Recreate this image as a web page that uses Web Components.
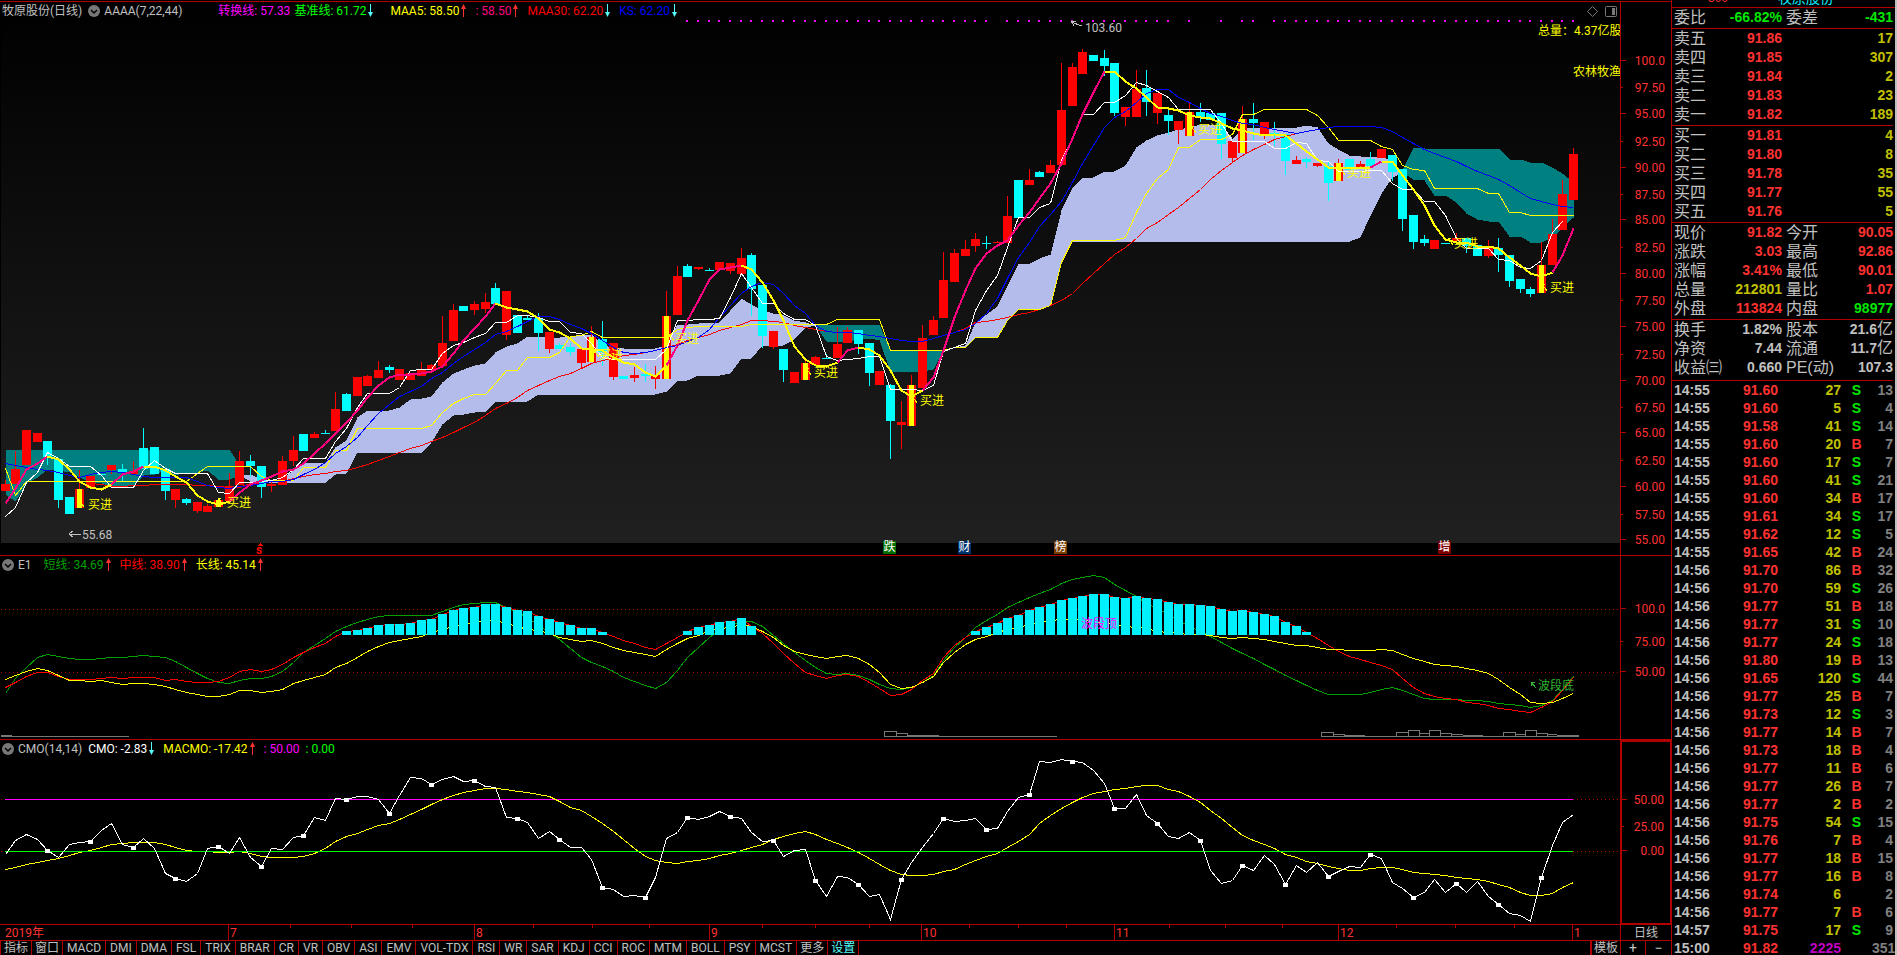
<!DOCTYPE html>
<html lang="zh-CN">
<head>
<meta charset="utf-8">
<title>牧原股份 日线</title>
<style>
  :root { --line: #b00000; --red: #ff3232; --green: #00e600; --gold: #c0c000; --grey: #c0c0c0; --cyan: #54fcfc; }
  html, body { height: 100%; }
  body { margin: 0; background: #000; color: #c0c0c0; font: 12px/12px Roboto, "Noto Sans CJK SC", sans-serif; overflow: hidden; }
</style>
</head>
<body>
<trade-terminal></trade-terminal>

<template id="t-terminal">
  <style>
    :host { display: grid; grid-template-columns: minmax(0, 1fr) 226px; height: 100vh; background: #000; }
    main { display: grid; grid-template-rows: 2px minmax(0, 554fr) minmax(0, 184fr) minmax(0, 185fr) 16px 14px; min-width: 0; }
    .top { border-bottom: 1px solid var(--line); }
  </style>
  <main>
    <div class="top"></div>
    <chart-panel>
      <chart-header slot="head">
        <span>牧原股份(日线)</span><fold-button gap="6"></fold-button><span>AAAA(7,22,44)</span>
        <ind-value gap="36" color="#ff00ff">转换线: 57.33</ind-value>
        <ind-value color="#00ff00" trend="down">基准线: 61.72</ind-value>
        <ind-value gap="16" color="#ffff00" trend="up">MAA5: 58.50</ind-value>
        <ind-value gap="8" color="#ff0080" trend="up">: 58.50</ind-value>
        <ind-value gap="8" color="#ff0000" trend="down">MAA30: 62.20</ind-value>
        <ind-value gap="8" color="#0000ff" trend="down">KS: 62.20</ind-value>
      </chart-header>
      <kline-plot slot="plot"></kline-plot>
      <value-axis slot="axis" top="2" height="553" labels="61:100.0 88:97.50 114:95.00 142:92.50 168:90.00 195:87.50 220:85.00 248:82.50 274:80.00 301:77.50 327:75.00 355:72.50 381:70.00 408:67.50 433:65.00 461:62.50 487:60.00 515:57.50 540:55.00"></value-axis>
    </chart-panel>
    <chart-panel>
      <chart-header slot="head">
        <fold-button></fold-button><span>E1</span>
        <ind-value gap="12" color="#00a000" trend="up">短线: 34.69</ind-value>
        <ind-value gap="8" color="#ff0000" trend="up">中线: 38.90</ind-value>
        <ind-value gap="8" color="#ffff00" trend="up">长线: 45.14</ind-value>
      </chart-header>
      <wave-plot slot="plot"></wave-plot>
      <value-axis slot="axis" top="556" height="183" labels="609:100.0 642:75.00 672:50.00"></value-axis>
    </chart-panel>
    <chart-panel active>
      <chart-header slot="head">
        <fold-button></fold-button><span>CMO(14,14)</span>
        <ind-value gap="6" color="#ffffff" trend="down">CMO: -2.83</ind-value>
        <ind-value gap="8" color="#ffff00" trend="up">MACMO: -17.42</ind-value>
        <ind-value gap="8" color="#ff00ff">: 50.00</ind-value>
        <ind-value gap="6" color="#00ff00">: 0.00</ind-value>
      </chart-header>
      <cmo-plot slot="plot"></cmo-plot>
      <value-axis slot="axis" top="740" height="184" labels="799:50.00 826:25.00 851:0.00"></value-axis>
    </chart-panel>
    <date-scale></date-scale>
    <indicator-bar></indicator-bar>
  </main>
  <quote-board></quote-board>
</template>

<template id="t-panel">
  <style>
    :host { display: grid; grid-template-columns: minmax(0, 1fr) 51px; min-height: 0; border-bottom: 1px solid var(--line); box-sizing: border-box; }
    .canvas { position: relative; min-width: 0; overflow: hidden; }
    .head { position: relative; }
    .plot { position: absolute; inset: 0; }
    .axis { border-left: 1px solid var(--line); min-height: 0; }
    :host([active]) .axis { border: 2px solid var(--line); border-bottom-width: 1px; border-right-width: 1px; }
  </style>
  <div class="canvas"><div class="plot"><slot name="plot"></slot></div><div class="head"><slot name="head"></slot></div></div>
  <div class="axis"><slot name="axis"></slot></div>
</template>

<template id="t-header">
  <style>:host { display: flex; align-items: center; height: 17px; padding-left: 2px; white-space: nowrap; }</style>
  <slot></slot>
</template>

<template id="t-fold">
  <style>
    :host { display: block; margin-right: 4px; }
    button { display: block; padding: 0; border: 0; background: none; width: 12px; height: 12px; }
    svg { display: block; }
  </style>
  <button aria-label="展开"><svg width="12" height="12" viewBox="0 0 12 12"><circle cx="6" cy="6" r="6" fill="#787878"/><path d="M3 5l3 3 3-3" fill="none" stroke="#000" stroke-width="1.5"/></svg></button>
</template>

<template id="t-value">
  <style>:host { display: flex; align-items: center; } svg { margin-left: 1px; }</style>
  <slot></slot>
</template>

<template id="t-date">
  <style>
    :host { display: grid; grid-template-columns: minmax(0, 1fr) 51px; border-bottom: 1px solid var(--line); box-sizing: border-box; color: var(--red); }
    .scale { position: relative; }
    .scale span { position: absolute; top: 2px; padding-left: 2px; }
    svg { position: absolute; inset: 0; width: 100%; height: 100%; }
    .period { border-left: 1px solid var(--line); color: var(--grey); display: grid; place-items: center; }
  </style>
  <div class="scale"></div><div class="period">日线</div>
</template>

<template id="t-bar">
  <style>
    :host { display: flex; min-width: 0; }
    button { font: inherit; color: var(--grey); background: #000; border: 0; border-right: 1px solid var(--line); padding: 1px 4px 0; height: 14px; line-height: 13px; white-space: nowrap; }
    .on { color: var(--cyan); }
    .zh { padding: 1px 3px 0; }
    .first { border-left: 1px solid var(--line); }
    nav { display: flex; flex: 1; min-width: 0; }
    .tpl { border-left: 2px solid var(--line); width: 31px; padding: 1px 2px 0; }
    .pm { width: 25px; font-size: 14px; }
    .last { border-right: 0; }
  </style>
  <nav></nav>
  <button class="tpl">模板</button><button class="pm">+</button><button class="pm last">−</button>
</template>

<template id="t-board">
  <style>
    :host { display: block; box-sizing: border-box; border-left: 1px solid var(--line); border-right: 2px solid #c0c0c0; overflow: hidden; font: bold 14px/18px "Liberation Sans", "Noto Sans CJK SC", sans-serif; }
    .cut { height: 7px; border-bottom: 1px solid var(--line); overflow: hidden; display: flex; align-items: flex-end; line-height: 15px; font-size: 12px; font-weight: 400; }
    .cut span { margin-bottom: 1px; }
    .mkt { color: var(--red); margin-left: 36px; width: 70px; }
    .name { color: #00f0ff; font-size: 14px; }
    table { border-collapse: collapse; table-layout: fixed; width: 221px; }
    td, th { padding: 0; text-align: right; white-space: nowrap; height: 19px; line-height: 19px; overflow: visible; }
    th { text-align: left; font-weight: 400; font-size: 16px; color: var(--grey); padding-left: 2px; }
    th + td + th { padding-left: 4px; }
    .b { border-bottom: 1px solid var(--line); padding-bottom: 1px; }
    tr:last-child .b { padding-bottom: 3px; }
    .unit { font-weight: 400; font-size: 16px; line-height: 0; }
    .r { color: var(--red); } .g { color: var(--green); } .y { color: var(--gold); } .w { color: var(--grey); } .m { color: #c000c0; } .d { color: #808080; }
    .ticks td { height: 18px; line-height: 18px; }
    .ticks td:first-child { text-align: left; padding-left: 2px; }
    .ticks .c { text-align: center; }
  </style>
  <div class="cut"><span class="mkt">300</span><span class="name">牧原股份</span></div>
</template>

<script>
const tpl = id => document.getElementById(id).content.cloneNode(true);
class Base extends HTMLElement {
  connectedCallback() {
    if (this.shadowRoot) return;
    this.attachShadow({ mode: 'open' });
    this.render(this.shadowRoot);
  }
}
const define = (name, id, after) => customElements.define(name, class extends Base {
  render(root) { root.append(tpl(id)); if (after) after(this, root); }
});

/* "y", "y*n" for n equal bars, "-" for a bar that the line passes without a vertex */
const STEP = 10.67;
const xAt = i => Math.floor(5 + STEP * i);
const series = (text, start = 0) => {
  const pts = [];
  let i = start;
  for (const token of text.trim().split(/\s+/)) {
    if (token === '-') { i++; continue; }
    const [y, n] = token.split('*').map(Number);
    for (let k = 0; k < (n || 1); k++) pts.push([i++, y]);
  }
  return pts;
};
const join = pts => pts.map(([i, y]) => (xAt(i) + .5) + ',' + (y + .5)).join(' ');
const line = (pts, color, w = 1) => `<polyline points="${join(pts)}" fill="none" stroke="${color}" stroke-width="${w}"/>`;
const rect = (x, y, w, h, fill) => `<rect x="${x}" y="${y}" width="${w}" height="${h}" fill="${fill}"/>`;
const dots = (x1, x2, y) => `<line x1="${x1}" x2="${x2}" y1="${y + .5}" y2="${y + .5}" stroke="#b00000" stroke-dasharray="1 3"/>`;

class Plot extends Base {
  render(root) {
    const [top, height] = this.range;
    const place = ([x, y, text, cls = '']) =>
      `<span class="${cls}" style="left:${x / 16.2}%;top:${(y - top) / height * 100}%">${text}</span>`;
    root.innerHTML = `<style>
      :host { display: block; position: absolute; inset: 0; }
      svg { display: block; width: 100%; height: 100%; shape-rendering: crispEdges; }
      span { position: absolute; margin-top: -5px; line-height: 12px; white-space: nowrap; color: #ffff00; }
      .grey { color: #c0c0c0; } .pink { color: #ff00ff; } .green { color: #32b432; }
      .tag { color: #fff; width: 13px; height: 13px; line-height: 13px; text-align: center; }
      .fall { background: #006e00; } .fin { background: #00326e; } .list { background: #783c00; } .inc { background: #7d0000; }
      .buy { color: #ff0000; font-weight: 700; }
    </style>
    <svg viewBox="0 ${top} 1620 ${height}" preserveAspectRatio="none">${this.draw()}</svg>${(this.labels || []).map(place).join('')}`;
  }
}

/* per bar: kind (r rising, c falling, y signal), body top and bottom, wick top and bottom */
const CANDLES = `r484-491,480-491 r469-484,451-484 r430-465 r433-442 c441-457,441-465 c459-500,459-508 c497-514 y489-508,470-508 r476-488 c474-475
r465-470,465-474 c469-472,464-482 r471-474,461-474 c448-469,428-469 c447-474 c469-491,469-500 r489-500,489-508 c499-503,498-505 r502-511,502-513 r506-512,504-512
y500-507 r486-501,473-501 r461-485,451-485 c461-466,455-477 c466-487,466-498 r484-486,480-492 r461-485,456-485 r450-461,436-466 c434-451 r434-438,432-438
c433-434,430-434 r409-431,392-431 c394-411,393-411 r377-396 r376-386,375-386 r370-378,361-378 c367-370,365-373 r369-380 r373-380 r370-376,362-376
r365-370,364-370 r343-366,316-366 r310-341,304-341 c306-311 r304-310,301-315 r302-309,293-313 c288-304,283-304 r291-335,291-340 c315-333 c318-320,316-320
c318-333,313-351 r332-349,332-353 c345-349,343-349 c347-352,343-356 r349-363,349-368 y337-362,326-362 c339-352,321-366 r343-377,343-380 c376-379 r375-378,367-382
c374-376,364-382 r375-379,366-389 y316-379,291-379 r276-315,266-315 c266-277,264-277 r267-269,267-270 c270-271,268-271 r262-270 r263-271,263-274 r258-274,248-274
c255-289,253-316 c285-336,285-348 r331-347,331-349 c349-370,349-382 r372-383 y363-380,361-380 r357-365,356-365 c358-359,354-359 r344-358,327-358 r330-343,327-343
c330-344,330-354 c343-373,343-386 r371-385 c385-421,384-459 r422-425,401-449 y385-426,375-426 r338-388,325-388 r320-335,316-335 r280-318,252-318 r253-282,249-282
r249-256,240-256 r239-246,233-252 c243-244,236-249 r242-243,241-243 r216-243,196-243 c180-218 r180-185,169-185 c172-177,171-177 r165-173,160-173 r110-165,63-165
r67-106,63-106 r52-74,49-74 c55-61 c58-66,50-76 c63-113,63-116 r107-117,107-126 r89-117,70-117 c88-102,70-116 r93-113,93-124 c115-121,108-135
r121-130,121-144 y112-136,103-136 c112-117,103-122 c113-120 c113-144,113-159 r141-158,141-163 y119-153,106-153 c119-123,103-140 r122-134,122-139 c133-134,122-146
c134-161,134-175 r160-164,156-164 c159-162,157-168 r163-166,163-167 c166-183,162-201 y163-181,159-181 c159-170 r164-169,161-169 c159-166,152-166 r149-158
c155-172,155-181 c169-219,169-231 c215-242,215-249 c239-243,235-246 r240-249 c243-244 r238-241,233-241 c238-246,238-253 c245-256 r248-256,240-258
c248-255,238-272 c255-281,255-287 c279-289,279-293 c289-294,287-297 y265-293,242-293 r234-265,219-265 r194-230,180-230 r154-200,148-200`.trim().split(/\s+/);

const CLOUDS = [
  ['#008080', 0, '449*22 465', '494 501 483 477 469 470 472 477 482 483 486 486 485 475 474 470 475 472 472 470 479 479 475'],
  ['#b4bcec', 22, '474 474 479 482 478 470 462*3 447 440 417 410*3 407 399 398 396 382 373 369 365 363 352 346 343 336 336 337 337 336 334 334 345 347 348*4 345 324 324 323 322 322 310 298 304 310 313 315 320 322 325',
    '475 481 482*7 474 473 452*7 442 424 415 414 412 411 401*4 394*12 391 380*2 375*3 373 358*2 345*3 339 327 325'],
  ['#008080', 76, '325 324*6 350*6', '325 341*3 339 338 340 371*4 369 350'],
  ['#b4bcec', 88, '350 347 345 322 314 306 285 263*2 258 254 210 187 177*2 171*2 165 147 140 135 132 129 127 124*2 125 138 128 127*5 125 127 143 149 155 156*3 161 172',
    '350 347 347 337*3 320 309*3 305 262 241*27 237 215 193 177 172'],
  ['#008080', 131, '169 147 148*8 159*2 162*2 167 173 182', '172 179 180 195*2 202 213 219 221*2 236*2 242*2 237 227 217']
];
const MAIN = series(`503 488 469 463 456 459 469 481 487 489 484 474 471 466 466 470 476 482 495 501 504 501 492 484 480 476 471 469 463 453
443 433 422 410 397 385 377 374 374 373 371 366 353 340 328 316 303 307 309 311 318 329 332 338 348 349 350 357 362 364
372 376 365 345 320 300 279 269 267 265 269 282 300 320 346 359 365 366 362 350 347 349 355 370 390 396 390 377 350 317
290 268 253 245 240 225 212 198 183 163 138 114 92 71 71 81 88 97 107 108 110 115 117 118 123 128 130 133 135 134
135 143 151 159 167*5 161 161 175 189 205 225 239 242 242 246 246 248 257 265 273 276 272 255 228`);
const FALLING = [[4, 10], [13, 21], [46, 62], [69, 78], [80, 86], [103, 128], [129, 145]];
const WHITE = series(`516 507 482 472 452 458 466*3 475 487*3 470 460 468 473*4 492 493 482*2 481 480 477 469 458*3 441 428 407 393*3 387
370 369 369 353 345 342 337 333 322 322 315*2 317 321 321 332 333 343 357 359*5 349 320 320 319 319 318 297 273 287 303
303 313 319 319 325 356 360 359 358 356 356 389*3 390 385 351 347 343 310 290 275 247 217*2 207 203 160 138 114*2 102*2 95 82
85 91 97 109*4 123 141*4 148*2 142 143 160 161 171*3 170*2 183 189*2 201*2 215 238 248*3 259 260 267 268 260 232 221`);
const YELLOW = series(`468 495 481*16 473 466*5 476 480*3 467*3 450*2 428*7 425 412 403 398 394*2 383 370*2 357*3
352 336 335 331 337*6 337 329 327 326*5 324*8 319*5 350*6 347*2 337*3 320 309*3 305 262 240*5 237 212 193 178 169 147*2 139*3 134
114*2 109*5 115 127 140*4 146 149 165 169 170 188*5 193*2 212*2 215*5`);
const BLUE = series(`463 465 467 469 470 472 475 477 474 472 471 472 474 476 477*4 481 485 487 488 486 485 483 481 481 479 474 469
462 453 446 437 425 413 404 396 391 386 378 372 363 356 349 342 334 331 326 321 316 316 319 324 328 333 340 347 352 353
352 350 347 345 341 337 329 317 305 293 286 282 284 293 305 313 325 331 332 332 333 335 336 338 340 341 341 338 335 332
329 323 313 298 278 257 242 226 214 201 182 163 145 127 117 111 102 93 89 89 97 102 108 113 116 120 123 124 127 129
131 133 131 129 127 126*4 127 131 137 143 149 153 157 161 166 171 175 179 185 192 198 201 204 206 207`);
const RED = series(`483 484 486*2 485*2 484*3 484 485 485 486 487 487 483 483 481 481 478 476 474 473 471 470 467 464 460 456 452 448 445 441
437 432 427 422 415 408 403 397 390 385 380 376 373 368 363 360 358 355 354 352 350 347 344 340 337 334 330 327 324 320 320
321 322 325 327 329 331 332 332 333 335 336 338 340 341 341 338 335 332 328 322 321 319 317 314 312 309 305 300 293 283
273 263 254 247 238 228 222 214 207 198 189 179 170 162 155 149 144 139 136 133`, 8);
const NO_DOT = new Set([93, 110, 112, 113, 115, 118]);

customElements.define('kline-plot', class extends Plot {
  get range() { return [2, 553]; }
  get labels() {
    return [
      [1085, 27, '103.60', 'grey'], [82, 534, '55.68', 'grey'],
      [1538, 30, '总量：4.37亿股'], [1573, 71, '农林牧渔'],
      ...[[88, 504], [227, 502], [599, 354], [675, 338], [814, 372], [920, 400], [1198, 129], [1347, 172], [1454, 243], [1550, 287]].map(([x, y]) => [x, y, '买进']),
      [256, 549, 's', 'buy'], [883, 546, '跌', 'tag fall'], [958, 546, '财', 'tag fin'], [1054, 546, '榜', 'tag list'], [1438, 546, '增', 'tag inc']
    ];
  }
  draw() {
    let s = `<defs><linearGradient id="sky" x1="0" y1="0" x2="0" y2="1"><stop offset="0" stop-color="#000"/><stop offset="1" stop-color="#202020"/></linearGradient></defs>`;
    s += rect(1, 2, 1619, 541, 'url(#sky)');
    for (const [color, start, top, bottom] of CLOUDS)
      s += `<polygon points="${join(series(top, start))} ${join(series(bottom, start).reverse())}" fill="${color}"/>`;
    CANDLES.forEach((text, i) => {
      const [, kind, t, b, h = t, l = b] = text.match(/^(\w)(\d+)-(\d+)(?:,(\d+)-(\d+))?/);
      const x = xAt(i), color = kind === 'c' ? '#00ffff' : '#ff0000';
      s += rect(x, h, 1, l - h, color) + rect(x - 4, t, 9, b - t, color);
      if (kind === 'y') s += rect(x - 2, t, 5, b - t, '#ffff00');
    });
    s += line(RED, '#ff0000') + line(YELLOW, '#ffff00') + line(BLUE, '#0000ff') + line(WHITE, '#ffffff');
    let at = 0;
    for (const [from, to] of FALLING) {
      s += line(MAIN.slice(at, from + 1), '#ff0080', 2) + line(MAIN.slice(from, to + 1), '#ffff00', 2);
      at = to;
    }
    s += line(MAIN.slice(at), '#ff0080', 2);
    for (let i = 64; i < 148; i++) if (!NO_DOT.has(i)) s += rect(xAt(i) - 1, 20, 2, 2, '#ff00ff');
    for (const [x, y] of [[79, 500], [218, 498], [594, 350], [669, 334], [806, 368], [912, 396], [1191, 126], [1340, 168], [1448, 238], [1542, 284]])
      s += `<path d="M${x} ${y}l5 7M${x} ${y}h3M${x} ${y}v3" stroke="#ffff00" fill="none"/>`;
    s += `<path d="M81 534H69M69 534l4-3M69 534l4 3M1082 26l-11-4M1071 21h5M1071 21l3 5" stroke="#c0c0c0" fill="none"/>`;
    s += `<path d="M257 546l3-3 3 3z" fill="#f00"/>`;
    s += `<g fill="none" stroke="#787878" shape-rendering="auto"><path d="M1592.500 6.500l5 5-5 5-5-5z"/><rect x="1605.500" y="6.500" width="11" height="10" rx="1"/></g>` + rect(1612, 8, 3, 7, '#787878');
    return s;
  }
});

const BARS = [
  [32, '631 630 628 625 624 624 623 620 619 614 610 608 607 604 604 607 610 611 616 619 622 625 628 628 632'],
  [64, '631 627 625 622 621 618 626'],
  [91, '631 627 623 618 615 610 607 604 600 598 596 594 594 597 598 596 598 599 602 604 604 605 606 609 611 610 612 614 616 622 626 632']
];
customElements.define('wave-plot', class extends Plot {
  get range() { return [556, 183]; }
  get labels() { return [[1081, 623, '波段顶', 'pink'], [1538, 685, '波段底', 'green']]; }
  draw() {
    let s = dots(1, 1620, 609) + dots(1, 1620, 672);
    s += line(series(`693 678 667 657 654 656 658 659 659 658 657 657 656 655 656 657 661 667 673 678 682 683 680 678 678 676 671 662 652 645
638 631 626 622 619 616 615*5 611 607 604 603 602 602 607 612 617 625 632 639 648 657 662 666 671 677 681
685 688 682 670 657 647 637 630 625 621 621 626 635 643 652 660 667 673 674 673 675 679 684 688 689 687 682 675 660 647
637 627 620 614 607 602 597 593 589 583 579 577 575 577 584 590 596 603 608 614 620 626 631 636 642 648 653 658 664 669
675 680 685 690 694*4 692 689 687 690 694 698 699 699 699 700 700 701 703 704 705 707 705 700 689 676`), '#00a000');
    s += line(series(`687 682 676 672 672 676 679 679 679 678 677 678 677 677 677 680 679 681 682 682 681 677 671 669 671 669 664 657 652 647
643 636 631 630 628 625 624 624 623 620 619 614 610 608 607 604 604 607 610 611 616 619 622 625 628 628 632 636 640 643
647 649 643 637 631 627 625 622 621 618 626 633 643 653 663 672 675 678 675 674 676 682 688 695 694 689 680 673 657 645
637 631 627 623 618 615 610 607 604 600 598 596 594 594 597 598 596 598 599 602 604 604 605 606 609 611 610 612 614 616
622 626 632 638 645 651 656 659 662 665 669 678 687 693 696 698 699 702 703 705 708 709 711 712 707 701 690 677`), '#ff0000');
    s += line(series(`679 675 671 668 670 675 680 680 681 680 682 684 683 683 684 686 689 692 694 696 696 694 690 690 692 691 689 683 680 677
674 667 663 657 651 646 642 640 638 636 632 629 626 624 622 620 620 623 626 629 630 633 637 639 641 640 643 647 650 652
654 656 649 643 638 635 630 628 627 624 626 631 637 645 651 654 656 658 656 655 658 664 672 684 688 687 682 676 662 652
644 639 636 632 629 627 624 622 620 619 619 620 621 623 624 626 627 628 631 632 633 634 634 635 637 638 637 638 639 641
643 645 645 647 649 649 650 650 650 649 650 654 658 661 664 665 666 668 670 673 679 687 694 702 703 702 698 693`), '#ffff00');
    for (const [start, tops] of BARS)
      for (const [i, y] of series(tops, start)) s += rect(xAt(i) - 4, y, 9, 635 - y, '#00f0ff');
    s += `<path d="M1 736.5H129M884.500 736.5V731.500H896V736.5M896.500 733.500H907.500V736M884 736.5H1057M1321.500 736V732.500H1333.500V736M1333 734.500H1344V736M1321 736.5H1579M1396.500 736V732.500H1408M1408.500 736V730.500H1419.500V736M1419 733.500H1429M1429.500 736V730.500H1440.500V736M1440 733.500H1451.500V736M1451 734.500H1463M1503.500 736V732.500H1515.500V736M1515 734.500H1525M1525.500 736V730.500H1536.500V736M1536 733.500H1547.500V736M1547 734.500H1557" fill="none" stroke="#787878"/>`;
    s += rect(1, 735, 11, 2, '#787878') + rect(907, 735, 32, 2, '#787878') + rect(1344, 735, 21, 2, '#787878') + rect(1463, 735, 20, 2, '#787878') + rect(1557, 735, 22, 2, '#787878');
    s += `<path d="M1531 682l5 6M1531 682h4M1531 682v4" stroke="#32b432" fill="none"/>`;
    return s;
  }
});

const CMO = series(`854 840 834 839 850 857 844 842 841 830 823 844 847 838 848 873 878 881 873 848 846 853 837 857 866 848 849 837 835 817
820 798 799 796 796 799 813 795 777 778 784 779 776 781 780 786 787 817 818 822 838 831 839 847 847 859 887 889 896 895
897 877 838 832 817 819 816 811 816 818 832 841 840 856 850 849 880 896 876 877 884 896 894 919 879 862 847 833 818 821
820 818 829 828 811 797 794 761 762 759 761 762 770 783 808 808 794 815 823 836 838 832 840 870 883 880 865 870 855 864
884 865 872 862 876 871 866 867 854 858 882 888 897 892 879 892 883 892 881 896 904 913 915 921 877 845 822 814`);
customElements.define('cmo-plot', class extends Plot {
  get range() { return [740, 184]; }
  draw() {
    let s = dots(1, 1620, 799) + dots(1, 1620, 851);
    s += rect(5, 799, 1568, 1, '#ff00ff');
    s += line(series(`869 867 864 862 860 858 855 852 850 847 844 843 842 842 842 844 847 850 851 851 852 852 851 853 856 857 857 857 856 853
848 841 836 833 829 825 823 819 814 809 804 799 795 792 790 788 788 789 791 792 794 796 801 807 810 816 823 831 839 848
856 860 862 863 861 860 858 855 853 850 847 844 839 836 833 831 834 839 843 847 852 858 864 870 874 875 875 874 871 869
864 860 856 853 847 841 834 823 815 808 802 797 793 791 789 788 786 785 785 789 791 796 802 810 818 827 835 840 844 848
854 857 861 863 866 868 870 870 868 867 867 869 872 873 874 875 877 878 879 881 884 887 892 895 895 893 887 882`), '#ffff00');
    s += rect(5, 851, 1568, 1, '#00ff00') + line(CMO, '#ffffff');
    for (const [i, y] of CMO) if (i && i % 4 === 0) s += rect(xAt(i) - 2, y - 1, 5, 4, '#ffffff');
    return s;
  }
});

customElements.define('value-axis', class extends Base {
  render(root) {
    const top = +this.getAttribute('top'), height = +this.getAttribute('height');
    const rows = this.getAttribute('labels').split(' ').map(t => t.split(':'));
    root.innerHTML = `<style>
      :host { display: block; position: relative; height: 100%; color: var(--red); }
      div { position: absolute; left: 0; right: 6px; height: 12px; margin-top: -6px; line-height: 13px; text-align: right; }
      div::before { content: ""; position: absolute; left: 0; top: 5px; width: 5px; height: 1px; background: var(--line); }
      .minor::before { width: 2px; }
    </style>` + rows.map(([y, t]) =>
      `<div class="${/[27]\.50|[27]5\.00/.test(t) && (height < 200 || /\.50/.test(t)) ? 'minor' : ''}" style="top:${(y - top) / height * 100}%">${t}</div>`).join('');
  }
});

define('chart-panel', 't-panel');
define('chart-header', 't-header');
define('fold-button', 't-fold', el => { el.style.marginLeft = (el.getAttribute('gap') || 0) + 'px'; });
define('ind-value', 't-value', (el, root) => {
  el.style.color = el.getAttribute('color');
  el.style.marginLeft = (el.getAttribute('gap') || 4) + 'px';
  const trend = el.getAttribute('trend');
  if (!trend) return;
  const up = trend === 'up';
  root.innerHTML += `<svg width="7" height="13" viewBox="0 0 7 13"><g fill="${up ? '#ff3232' : '#54fcfc'}"${up ? '' : ' transform="rotate(180 3.500 6.500)"'}><rect x="3" y="1" width="1" height="12"/><path d="M1 5l2.500-5 2.500 5z"/></g></svg>`;
});
define('date-scale', 't-date', (el, root) => {
  const months = [[228, '7'], [474, '8'], [709, '9'], [921, '10'], [1114, '11'], [1338, '12'], [1572, '1']];
  const minor = [290, 351, 412, 533, 592, 649, 762, 815, 869, 969, 1018, 1066, 1169, 1225, 1282, 1396, 1455, 1514];
  root.querySelector('.scale').innerHTML = `<svg viewBox="0 0 1620 15" preserveAspectRatio="none" shape-rendering="crispEdges">${months.map(([x]) => rect(x, 0, 1, 15, '#b00000')).join('')}${minor.map(x => rect(x, 0, 1, 3, '#b00000')).join('')}</svg>`
    + [[3, '2019年'], ...months].map(([x, t]) => `<span style="left:${x / 16.2}%">${t}</span>`).join('');
});
define('indicator-bar', 't-bar', (el, root) => {
  root.querySelector('nav').innerHTML = '指标 窗口 MACD DMI DMA FSL TRIX BRAR CR VR OBV ASI EMV VOL-TDX RSI WR SAR KDJ CCI ROC MTM BOLL PSY MCST 更多 设置'
    .split(' ').map((t, i) => `<button class="${i ? '' : 'first '}${t.charCodeAt(0) > 255 ? 'zh ' : ''}${t === '设置' ? 'on' : ''}">${t}</button>`).join('');
});
define('quote-board', 't-board', (el, root) => {
  const groups = [
    ['委比 g-66.82% 委差 g-431'],
    ['卖五 r91.86 _ y17', '卖四 r91.85 _ y307', '卖三 r91.84 _ y2', '卖二 r91.83 _ y23', '卖一 r91.82 _ y189'],
    ['买一 r91.81 _ y4', '买二 r91.80 _ y8', '买三 r91.78 _ y35', '买四 r91.77 _ y55', '买五 r91.76 _ y5'],
    ['现价 r91.82 今开 r90.05', '涨跌 r3.03 最高 r92.86', '涨幅 r3.41% 最低 r90.01', '总量 y212801 量比 r1.07', '外盘 r113824 内盘 g98977'],
    ['换手 w1.82% 股本 w21.6亿', '净资 w7.44 流通 w11.7亿', '收益㈢ w0.660 PE(动) w107.3']
  ];
  const value = t => `${t.slice(1).replace('亿', '<span class="unit">亿</span>')}`;
  const rows = groups.flatMap(g => g.map((t, i) => {
    const [a, b, c, d] = t.split(' '), cls = i === g.length - 1 ? ' b' : '';
    return `<tr><th class="${cls}" scope="row">${a}</th><td class="${b[0]}${cls}">${value(b)}</td><th class="${cls}">${c === '_' ? '' : c}</th><td class="${d[0]}${cls}">${value(d)}</td></tr>`;
  })).join('');
  const ticks = `1455 60 27 S 13|1455 60 5 S 4|1455 58 41 S 14|1455 60 20 B 7|1455 60 17 S 7|1455 60 41 S 21|1455 60 34 B 17|1455 61 34 S 17|1455 62 12 S 5|1455 65 42 B 24|1456 70 86 B 32|1456 70 59 S 26|1456 77 51 B 18|1456 77 31 S 10|1456 77 24 S 18|1456 80 19 B 13|1456 65 120 S 44|1456 77 25 B 7|1456 73 12 S 3|1456 77 14 B 7|1456 73 18 B 4|1456 77 11 B 6|1456 77 26 B 7|1456 77 2 B 2|1456 75 54 S 15|1456 76 7 B 4|1456 77 18 B 15|1456 77 16 B 8|1456 74 6 _ 2|1456 77 7 B 6|1457 75 17 S 9|1500 82 2225 _ 351`
    .split('|').map(t => {
      const [time, price, vol, side, n] = t.split(' ');
      return `<tr><td class="w">${time.slice(0, 2)}:${time.slice(2)}</td><td class="r">91.${price}</td><td class="${vol > 999 ? 'm' : 'y'}">${vol}</td><td class="c ${side === 'S' ? 'g' : 'r'}">${side === '_' ? '' : side}</td><td class="d">${n}</td></tr>`;
    }).join('');
  root.innerHTML += `<table><colgroup><col style="width:50px"><col style="width:60px"><col style="width:50px"><col></colgroup>${rows}</table>
    <table class="ticks"><colgroup><col style="width:50px"><col style="width:56px"><col style="width:63px"><col style="width:31px"><col></colgroup>${ticks}</table>`;
});
define('trade-terminal', 't-terminal');
</script>
</body>
</html>
